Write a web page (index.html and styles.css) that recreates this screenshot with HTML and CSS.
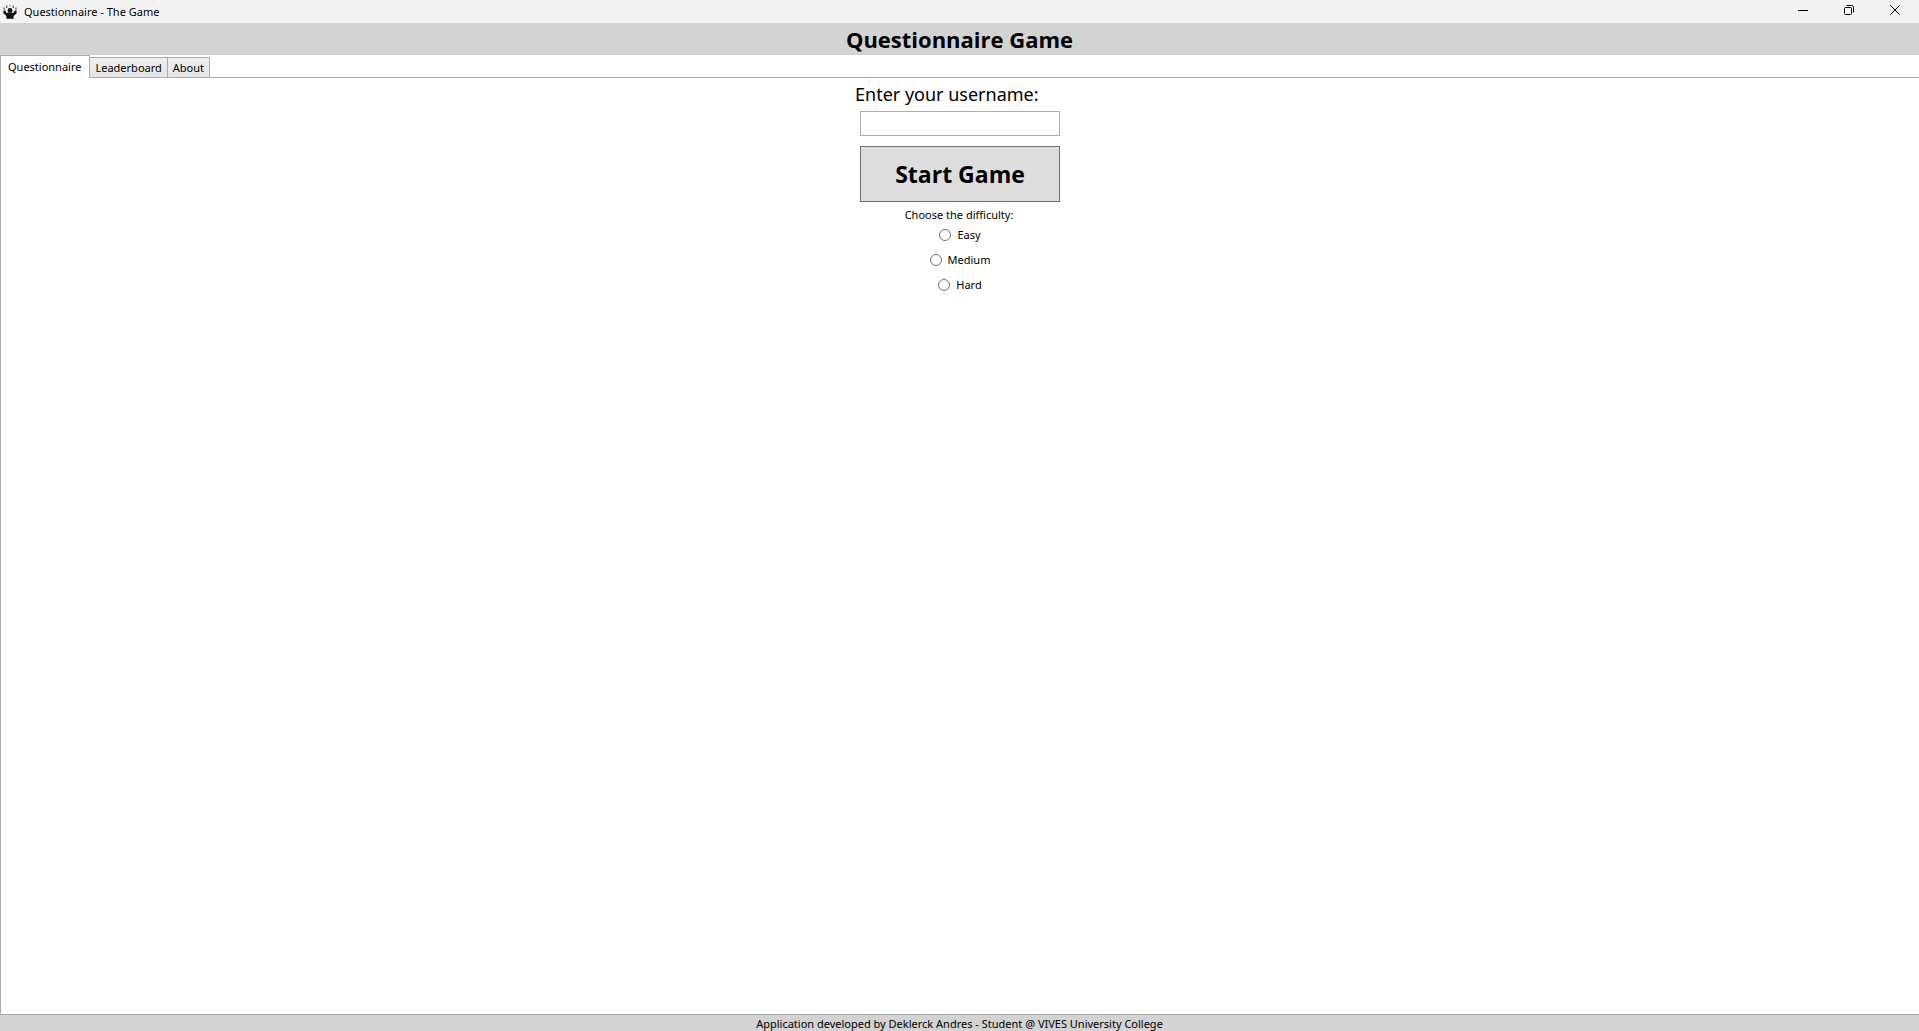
FILE: index.html
```html
<!DOCTYPE html>
<html lang="en">
<head>
<meta charset="utf-8">
<title>Questionnaire - The Game</title>
<link rel="stylesheet" href="styles.css">
</head>
<body>
<div class="titlebar">
  <svg class="app-icon" width="16" height="16" viewBox="0 0 16 16" aria-hidden="true">
    <circle cx="8" cy="6.4" r="2.4"/>
    <path d="M1.4 6.5H3.2L4.6 9 6.6 8.4H9.4L11.4 9 12.8 6.5H14.6V9.2L11.6 12V14.8H4.4V12L1.4 9.2Z"/>
    <path d="M1.4 3.4h1.4v2.4H1.4zM4 1.6h1.4V4H4zM10.6 1.6H12V4h-1.4zM13.2 3.4h1.4v2.4h-1.4z" opacity=".6"/>
    <path d="M7.4.6h1.2v2H7.4z" opacity=".35"/>
  </svg>
  <span class="window-title">Questionnaire - The Game</span>
  <div class="window-controls">
    <button type="button" aria-label="Minimize"><svg width="10" height="10" viewBox="0 0 10 10"><path d="M0 5.5h10"/></svg></button>
    <button type="button" aria-label="Restore"><svg width="10" height="10" viewBox="0 0 10 10"><rect x=".5" y="2.5" width="7" height="7" rx="1"/><path d="M2.5.5H7.5a2 2 0 0 1 2 2V7.5"/></svg></button>
    <button type="button" aria-label="Close"><svg width="10" height="10" viewBox="0 0 10 10"><path d="M.3.3l9.4 9.4M9.7.3.3 9.7"/></svg></button>
  </div>
</div>
<header class="banner"><h1>Questionnaire Game</h1></header>
<div class="tabs" role="tablist">
  <button type="button" class="tab tab-active" role="tab" aria-selected="true">Questionnaire</button>
  <button type="button" class="tab" role="tab" aria-selected="false">Leaderboard</button>
  <button type="button" class="tab" role="tab" aria-selected="false">About</button>
</div>
<main class="panel">
  <form class="start-form">
    <label class="username-label" for="username">Enter your username:</label>
    <input class="username" id="username" type="text">
    <button class="start" type="button">Start Game</button>
    <fieldset class="difficulty">
      <legend>Choose the difficulty:</legend>
      <label><input type="radio" name="difficulty">Easy</label>
      <label><input type="radio" name="difficulty">Medium</label>
      <label><input type="radio" name="difficulty">Hard</label>
    </fieldset>
  </form>
</main>
<footer class="footer">Application developed by Deklerck Andres - Student @ VIVES University College</footer>
</body>
</html>
```
FILE: styles.css
```css
* { box-sizing: border-box; }
body {
  margin: 0;
  height: 100vh;
  display: flex;
  flex-direction: column;
  overflow: hidden;
  background: #fff;
  color: #000;
  font: 11px/16px "Segoe UI", "Noto Sans", "Open Sans", sans-serif;
}
button, input { font: inherit; color: inherit; }
button { padding: 0; }

.titlebar {
  display: flex;
  align-items: center;
  height: 23px;
  padding-left: 2px;
  background: #f3f3f3;
}
.app-icon { fill: #111; }
.window-title { margin-left: 6px; }
.window-controls { display: flex; margin-left: auto; padding-right: 1px; }
.window-controls button {
  display: flex;
  align-items: center;
  justify-content: center;
  width: 46px;
  height: 20px;
  margin-bottom: 3px;
  border: 0;
  background: none;
}
.window-controls svg { fill: none; stroke: #000; }

.banner { background: #d3d3d3; text-align: center; }
.banner h1 {
  margin: 0;
  font-family: "Segoe UI", "Open Sans", sans-serif;
  font-size: 22px;
  line-height: 32px;
}

.tabs {
  display: flex;
  align-items: flex-end;
  height: 23px;
  border-bottom: 1px solid #acacac;
}
.tab {
  height: 21px;
  padding: 0 5px;
  border: 1px solid #acacac;
  border-left: 0;
  background: linear-gradient(#f0f0f0, #e5e5e5);
  margin-bottom: -1px;
}
.tab-active {
  height: 23px;
  padding: 0 8px 0 7px;
  border-left: 1px solid #acacac;
  border-bottom: 0;
  background: #fff;
}

.panel {
  flex: 1;
  border-left: 1px solid #acacac;
  border-bottom: 1px solid #acacac;
}
.start-form {
  display: flex;
  flex-direction: column;
  width: 200px;
  margin: 0 auto;
}
.username-label {
  height: 33px;
  margin-left: -5px;
  font-size: 18px;
  line-height: 32px;
  white-space: nowrap;
}
.username {
  height: 25px;
  padding: 0 4px;
  border: 1px solid #abadb3;
  background: #fff;
}
.start {
  height: 56px;
  margin-top: 10px;
  border: 1px solid #707070;
  background: #ddd;
  font-family: "Segoe UI", "Open Sans", sans-serif;
  font-size: 23px;
  font-weight: 700;
}
.difficulty {
  display: flex;
  flex-direction: column;
  align-items: center;
  gap: 9px;
  margin: 5px 0 0;
  padding: 4px 0 0;
  border: 0;
}
.difficulty legend { margin: 0 auto; padding: 0 2px 0 0; }
.difficulty label { display: flex; align-items: center; gap: 6px; }
.difficulty input {
  appearance: none;
  width: 12px;
  height: 12px;
  margin: 0;
  border: 1px solid #707070;
  border-radius: 50%;
  background: #fff;
}
.difficulty input:checked { background: radial-gradient(#212121 3px, #fff 4px); }

.footer {
  height: 16px;
  background: #d3d3d3;
  line-height: 18px;
  text-align: center;
  overflow: hidden;
}
```
